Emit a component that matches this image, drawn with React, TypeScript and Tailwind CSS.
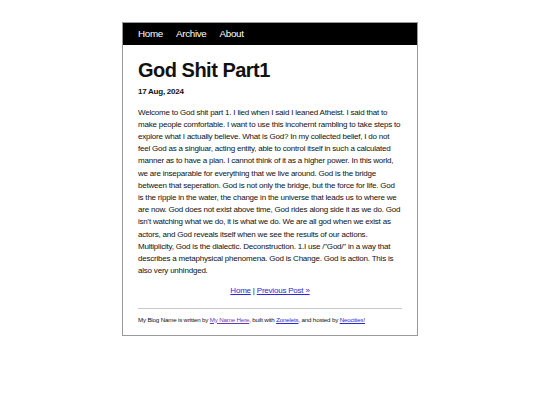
export default function App() {
  return (
    <div className="min-h-[405px] bg-white pt-[22px] font-['Liberation_Sans',Arial,sans-serif] text-[#111]">
      <div className="mx-auto w-[296px] border border-[#9a9a9a] bg-white">
        <nav className="flex h-[22px] items-center gap-[13px] bg-black px-[15px] text-[9.8px] tracking-[-0.3px] text-white">
          <span>Home</span>
          <span>Archive</span>
          <span>About</span>
        </nav>
        <div className="px-[15px] pb-[11px]">
          <h1 className="mt-[14px] text-[20px] font-bold leading-[23px] tracking-[-0.5px]">God Shit Part1</h1>
          <div className="mt-[4px] text-[8px] font-bold leading-[11px] tracking-[-0.25px]">17 Aug, 2024</div>
          <p className="mt-[9.5px] text-[8px] leading-[12.2px] tracking-[-0.21px]">
            Welcome to God shit part 1. I lied when I said I leaned Atheist. I said that to make people comfortable. I want to use this incohernt rambling to take steps to explore what I actually believe. What is God? In my collected belief, I do not feel God as a singluar, acting entity, able to control itself in such a calculated manner as to have a plan. I cannot think of it as a higher power. In this world, we are inseparable for everything that we live around. God is the bridge between that seperation. God is not only the bridge, but the force for life. God is the ripple in the water, the change in the universe that leads us to where we are now. God does not exist above time, God rides along side it as we do. God isn't watching what we do, it is what we do. We are all god when we exist as actors, and God reveals itself when we see the results of our actions. Multiplicity, God is the dialectic. Deconstruction. 1.I use /"God/" in a way that describes a metaphysical phenomena. God is Change. God is action. This is also very unhindged.
          </p>
          <div className="mt-[8px] text-center text-[8px] leading-[12.2px] tracking-[-0.21px]">
            <a href="#" className="text-[#2a2ad8] underline">Home</a> | <a href="#" className="text-[#2a2ad8] underline">Previous Post »</a>
          </div>
          <div className="mt-[10px] h-px bg-[#c8c8c8]" />
          <div className="mt-[7px] text-[6.2px] leading-[8px] tracking-[-0.18px]">
            My Blog Name is written by <a href="#" className="text-[#6a3ab0] underline">My Name Here</a>, built with <a href="#" className="text-[#2a2ad8] underline">Zonelets</a>, and hosted by <a href="#" className="text-[#2a2ad8] underline">Neocities!</a>
          </div>
        </div>
      </div>
    </div>
  );
}
